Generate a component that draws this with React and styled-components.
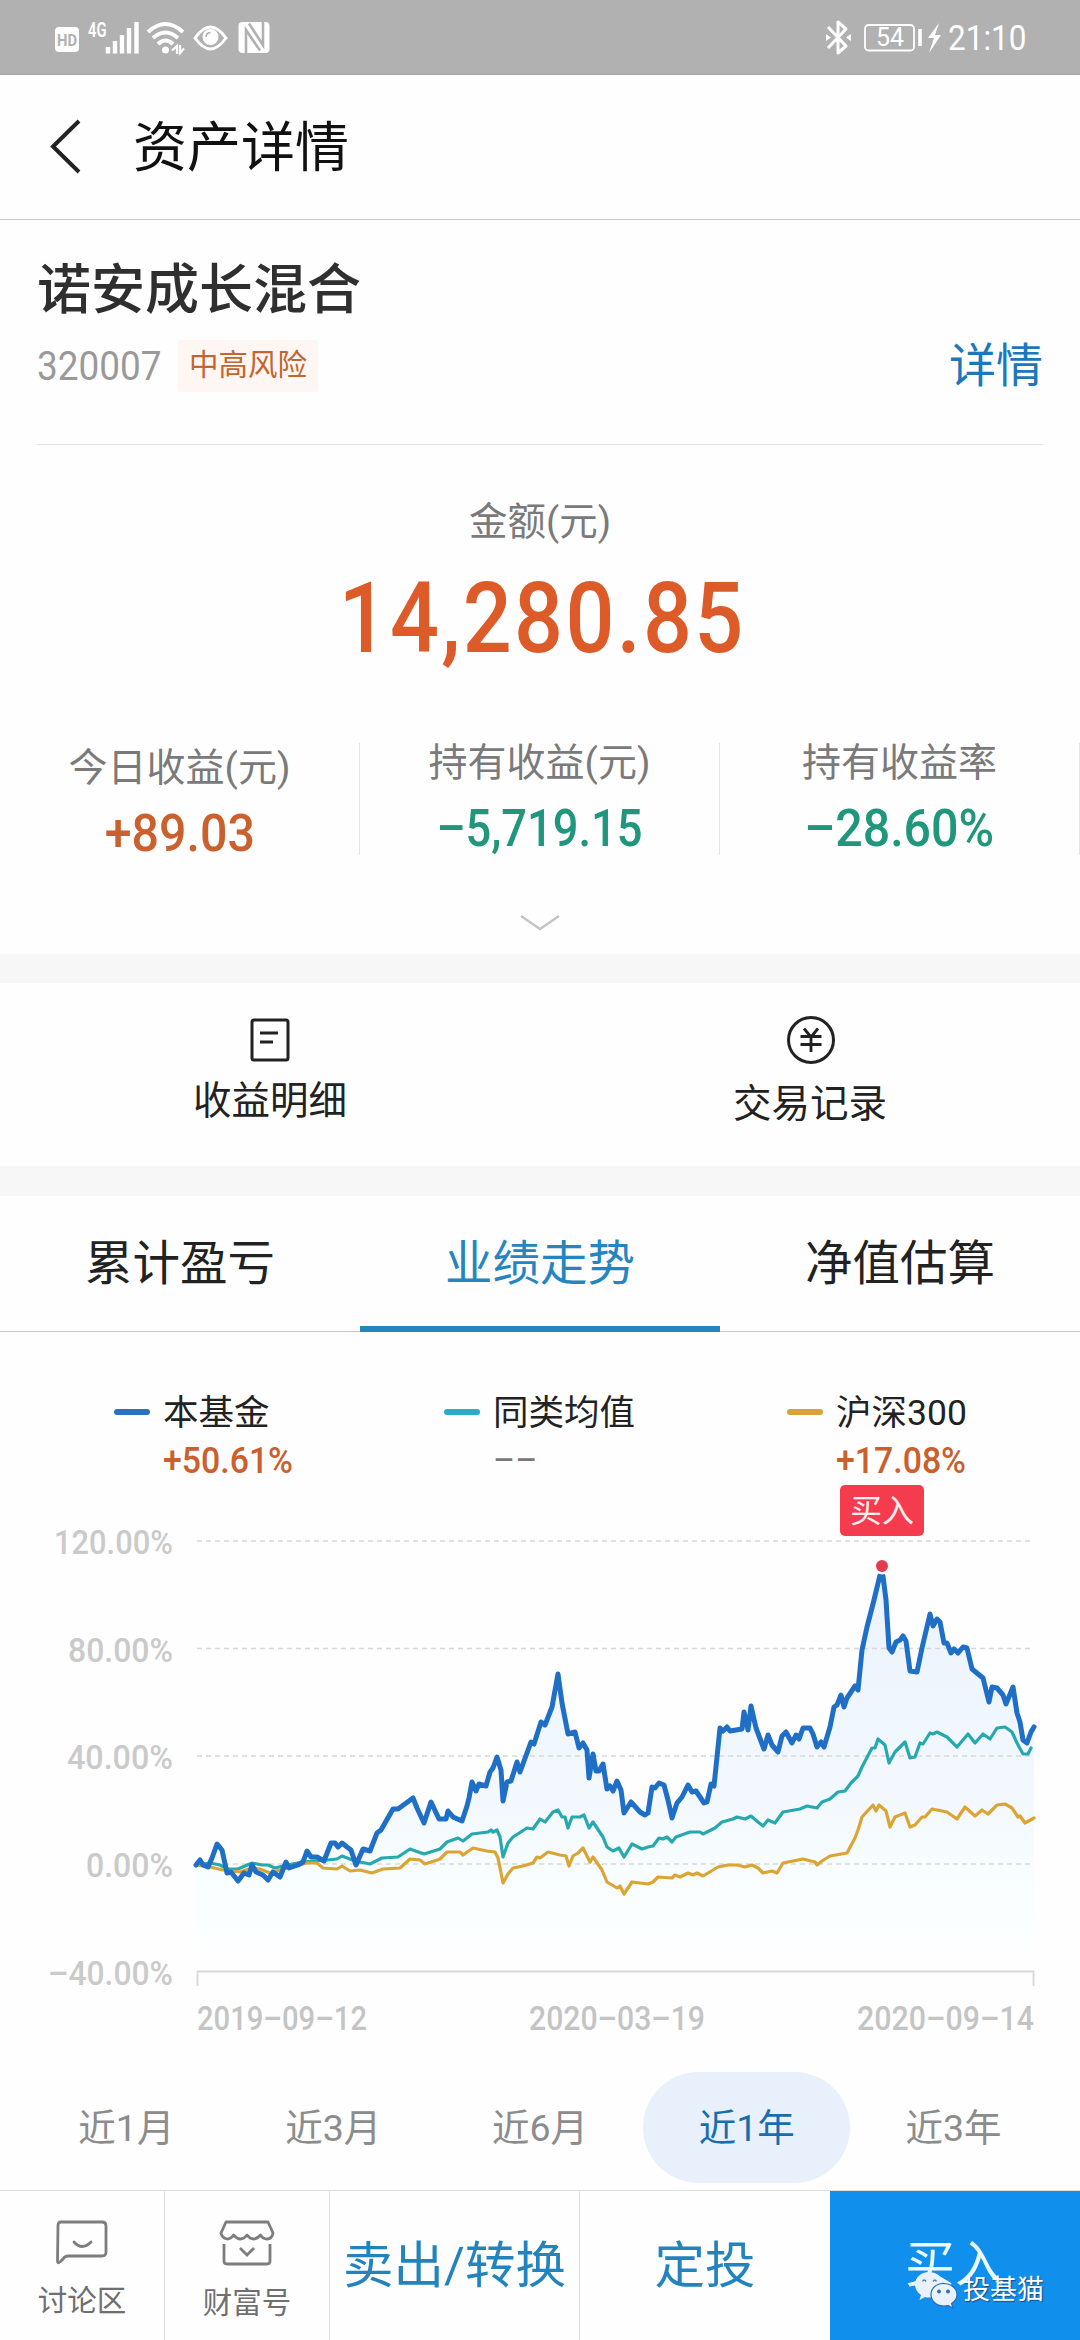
import styled, { createGlobalStyle } from "styled-components";

const fundLine =
  "16,385 20,380 23,385 28,387 32,378 37,364 42,370 47,393 51,392 58,401 64,393 69,395 72,385 76,392 83,395 88,400 93,392 100,397 106,382 109,388 118,385 123,382 127,371 131,377 137,377 144,381 151,363 155,363 158,367 162,363 167,367 171,370 176,385 183,369 190,371 197,353 201,350 213,329 218,329 233,318 237,328 244,343 251,322 259,339 266,339 268,331 273,337 282,341 287,326 289,318 292,302 296,311 299,304 306,306 310,292 313,288 317,277 321,290 323,321 327,302 331,301 337,282 340,292 351,262 354,264 361,242 365,245 372,227 378,194 382,223 388,254 395,252 399,268 403,263 407,270 409,298 413,274 416,291 419,291 423,284 427,309 430,306 433,311 437,301 441,310 444,333 451,322 460,332 465,335 468,333 472,307 475,308 479,303 484,305 488,320 492,338 497,323 502,317 508,305 512,312 516,311 524,323 527,322 531,304 534,306 540,248 543,251 547,247 550,251 562,249 564,232 568,250 571,226 576,248 584,269 588,255 592,265 598,272 602,256 606,252 612,263 616,255 619,259 623,248 630,248 633,254 637,267 641,262 644,267 650,247 654,227 657,225 661,215 664,227 667,218 675,206 678,210 682,170 687,147 694,120 700,95 703,96 706,120 709,168 712,172 716,162 720,160 723,156 726,161 730,191 737,192 742,168 750,134 753,146 757,139 760,142 764,163 767,163 771,173 774,169 778,173 783,167 787,168 792,189 803,198 809,222 812,207 817,208 823,215 826,224 833,207 837,233 840,242 843,260 847,263 851,252 854,247";

const averageLine =
  "16,385 30,383 40,385 48,389 58,389 72,383 82,385 88,385 95,388 107,385 123,382 147,380 157,379 162,376 175,381 190,384 202,378 218,377 230,369 244,374 260,369 267,362 278,358 283,361 292,354 308,352 311,350 313,352 317,350 320,357 323,377 328,363 333,357 347,348 353,349 360,339 365,342 373,332 378,330 382,337 385,337 388,348 392,337 400,337 404,335 409,348 413,342 423,357 427,367 433,371 439,368 444,377 452,364 462,369 468,367 473,366 479,358 483,359 487,357 492,362 496,357 510,352 520,352 523,354 535,348 542,342 553,339 557,337 565,339 571,336 578,342 583,346 588,340 595,343 603,332 620,329 627,326 637,328 642,322 650,319 658,312 665,311 671,303 678,296 682,287 692,268 695,268 698,259 705,265 709,283 715,272 725,262 730,278 735,277 740,263 743,264 750,253 753,254 757,252 767,257 777,267 788,254 795,263 803,254 810,259 817,248 825,247 832,252 837,263 843,274 848,274 851,268";

const indexLine =
  "16,385 30,387 43,390 60,392 72,388 80,389 90,393 100,390 110,387 127,383 137,383 143,388 157,389 162,386 170,391 180,390 192,393 203,389 220,388 230,379 240,380 245,384 260,379 267,372 280,372 283,375 293,368 307,371 315,372 318,378 323,403 328,394 333,388 343,386 353,383 357,377 360,378 368,372 380,375 386,376 389,386 393,376 398,373 403,368 410,382 413,377 422,390 427,402 437,408 440,406 444,414 452,402 460,403 468,404 473,402 478,397 492,398 495,395 500,397 508,393 513,395 517,393 523,396 538,387 548,385 557,385 565,387 572,385 578,388 583,393 592,391 597,393 603,383 623,379 635,382 637,385 642,381 650,376 667,373 675,358 678,350 682,337 693,325 696,331 699,325 706,331 710,347 715,337 725,333 730,347 735,345 742,337 745,337 752,329 767,332 777,339 785,327 795,336 802,330 808,334 817,325 825,324 832,328 838,337 840,336 845,343 854,338";

const stats = [
  { label: "今日收益(元)", value: "+89.03", color: "#c9602d", top: 26, stretch: 0.93 },
  { label: "持有收益(元)", value: "–5,719.15", color: "#20977d", top: 21, stretch: 0.87 },
  { label: "持有收益率", value: "–28.60%", color: "#20977d", top: 21, stretch: 0.93 },
];

const legends = [
  { name: "本基金", value: "+50.61%", color: "#2a72bf", indent: 114 },
  { name: "同类均值", value: "--", color: "#2aabc8", indent: 0 },
  { name: "沪深300", value: "+17.08%", color: "#d9a33a", indent: 0 },
];

const yTicks = [
  { label: "120.00%", y: 61, x: 54 },
  { label: "80.00%", y: 168.5, x: 68 },
  { label: "40.00%", y: 276, x: 67 },
  { label: "0.00%", y: 384, x: 86 },
  { label: "–40.00%", y: 491.5, x: 48 },
];

const dates = [
  { label: "2019–09–12", x: 197, width: 170 },
  { label: "2020–03–19", x: 529, width: 176 },
  { label: "2020–09–14", x: 857, width: 177 },
];

const ranges = ["近1月", "近3月", "近6月", "近1年", "近3年"];

function StatusIcons() {
  return (
    <svg width="240" height="74" viewBox="40 0 240 74" fill="none">
      <rect x="55" y="27" width="24" height="25" rx="4" fill="#fff" />
      <text x="57" y="45.5" fontSize="16" fontWeight="700" fill="#b1b1b1" textLength="20" lengthAdjust="spacingAndGlyphs">
        HD
      </text>
      <text x="88" y="36.5" fontSize="21" fontWeight="600" fill="#fff" textLength="18.5" lengthAdjust="spacingAndGlyphs">
        4G
      </text>
      <path
        d="M108 47V53.500M115 41V53.500M122 35V53.500M129 28V53.500M136.500 22V53.500"
        stroke="#fff"
        strokeWidth="4.400"
      />
      <path
        d="M148 32Q165.500 16 183 32M153 38Q165.500 27 178 38M158 44Q165.500 37 173 44"
        stroke="#fff"
        strokeWidth="4"
      />
      <circle cx="165.500" cy="50" r="3.500" fill="#fff" />
      <path d="M172 50.500L177 46V54M180 45V53L184 48.500" stroke="#fff" strokeWidth="2.200" />
      <path
        d="M195 38C200 31 205 27 210.500 27S221 31 226 38C221 45 216 49 210.500 49S200 45 195 38Z"
        stroke="#fff"
        strokeWidth="3"
      />
      <circle cx="210.500" cy="37" r="8" fill="#fff" />
      <path d="M206 37Q206 33 210.500 32.500" stroke="#b1b1b1" strokeWidth="1.600" />
      <rect x="238.500" y="22" width="31" height="31" rx="4" fill="#fff" />
      <path d="M246 54V30L260 50.500M249 23.500L263 45V21" stroke="#b1b1b1" strokeWidth="2.600" />
    </svg>
  );
}

function BatteryIcons() {
  return (
    <svg width="126" height="74" viewBox="822 0 126 74" fill="none">
      <path
        d="M828 27L846 46L838 53V22L846 29L828 48"
        stroke="#fff"
        strokeWidth="3"
        strokeLinejoin="round"
      />
      <path d="M826 34L831 37.500L826 41ZM851 34L846 37.500L851 41Z" fill="#fff" />
      <rect x="865" y="25" width="49" height="25.500" rx="3.500" stroke="#fff" strokeWidth="1.800" />
      <text x="876" y="46" fontSize="26" fill="#fff" textLength="28" lengthAdjust="spacingAndGlyphs">
        54
      </text>
      <path d="M920 29V46" stroke="#fff" strokeWidth="3.600" />
      <path d="M939 23L928 38H934L929 53L941 35H935Z" fill="#fff" />
    </svg>
  );
}

function Chart() {
  return (
    <ChartSvg width="1080" height="572" viewBox="0 0 1080 572">
      <defs>
        <linearGradient id="fill" x1="0" y1="0" x2="0" y2="1">
          <stop offset="0" stopColor="#ebf3fc" />
          <stop offset="0.6" stopColor="#f3f8fe" />
          <stop offset="0.8" stopColor="#f8fdfe" />
          <stop offset="1" stopColor="#fdffff" />
        </linearGradient>
      </defs>
      <g transform="translate(180 0)">
        <polygon points={`16,470 ${fundLine} 854,470`} fill="url(#fill)" />
      </g>
      {yTicks.map((tick) => (
        <g key={tick.label}>
          {tick.y < 490 && (
            <line x1="197" x2="1032" y1={tick.y} y2={tick.y} stroke="#d8d8d8" strokeWidth="1.6" strokeDasharray="5 4" />
          )}
          <text
            x={tick.x}
            y={tick.y + 13}
            fontSize="34"
            fontWeight="500"
            fill="#cacaca"
            textLength={173 - tick.x}
            lengthAdjust="spacingAndGlyphs"
          >
            {tick.label}
          </text>
        </g>
      ))}
      <path d="M197.500 506V491.500H1033.500V506" fill="none" stroke="#d8d8d8" strokeWidth="1.800" />
      {dates.map((date) => (
        <text
          key={date.label}
          x={date.x}
          y="550"
          fontSize="34"
          fontWeight="500"
          fill="#c4c4c4"
          textLength={date.width}
          lengthAdjust="spacingAndGlyphs"
        >
          {date.label}
        </text>
      ))}
      <g transform="translate(180 0)" fill="none" strokeLinejoin="round" strokeLinecap="round">
        <polyline points={averageLine} stroke="#26a9ae" strokeWidth="3.2" />
        <polyline points={indexLine} stroke="#dba433" strokeWidth="3.2" />
        <polyline points={fundLine} stroke="#1f6fc6" strokeWidth="5" />
      </g>
      <circle cx="882" cy="86" r="8.5" fill="#fff" />
      <circle cx="882" cy="86" r="6" fill="#e53a4e" />
      <rect x="840" y="5" width="84" height="51" rx="5" fill="#f43c4e" />
      <text x="850" y="42" fontSize="32" fill="#ffeef0">
        买入
      </text>
    </ChartSvg>
  );
}

function App() {
  return (
    <Page>
      <GlobalStyle />
      <StatusBar>
        <StatusIcons />
        <StatusRight>
          <BatteryIcons />
          <Clock>
            <Num $stretch={0.9} $origin="left">21:10</Num>
          </Clock>
        </StatusRight>
      </StatusBar>

      <Header>
        <svg width="36" height="60" viewBox="0 0 36 60" fill="none">
          <path d="M31 4L5 29.500L31 55" stroke="#222" strokeWidth="4" />
        </svg>
        <HeaderTitle>资产详情</HeaderTitle>
      </Header>

      <Fund>
        <FundName>诺安成长混合</FundName>
        <FundRow>
          <FundCode>
            <Num $stretch={0.9} $origin="left">320007</Num>
          </FundCode>
          <RiskTag>中高风险</RiskTag>
          <DetailLink>详情</DetailLink>
        </FundRow>
      </Fund>

      <Amount>
        <AmountLabel>金额(元)</AmountLabel>
        <AmountValue>
          <Num $stretch={0.88}>14,280.85</Num>
        </AmountValue>
      </Amount>

      <Stats>
        {stats.map((stat) => (
          <Stat key={stat.label}>
            <StatInner $top={stat.top}>
              <StatLabel>{stat.label}</StatLabel>
              <StatValue $color={stat.color}>
                <Num $stretch={stat.stretch}>{stat.value}</Num>
              </StatValue>
            </StatInner>
          </Stat>
        ))}
      </Stats>
      <Expand>
        <svg width="42" height="20" viewBox="0 0 42 20" fill="none">
          <path d="M2 3L21 16L40 3" stroke="#c4c4c4" strokeWidth="2.400" />
        </svg>
      </Expand>

      <Gap $height={29} />

      <Entries>
        <Entry>
          <svg width="50" height="50" viewBox="0 0 50 50" fill="none" stroke="#222" strokeWidth="3">
            <rect x="7" y="5" width="36" height="40" rx="2" />
            <path d="M15 18H33M15 27H28" />
          </svg>
          <EntryLabel>收益明细</EntryLabel>
        </Entry>
        <Entry>
          <svg width="50" height="50" viewBox="0 0 50 50" fill="none" stroke="#222" strokeWidth="3">
            <circle cx="26" cy="25" r="22.500" />
            <path d="M19 13.500L26 22L33 13.500M26 22V37M15.500 21.500H36.500M15.500 29.500H36.500" strokeWidth="2.800" />
          </svg>
          <EntryLabel $shift={3}>交易记录</EntryLabel>
        </Entry>
      </Entries>

      <Gap $height={30} />

      <Tabs>
        <Tab>累计盈亏</Tab>
        <Tab $active>业绩走势</Tab>
        <Tab>净值估算</Tab>
      </Tabs>

      <Legends>
        {legends.map((item) => (
          <Legend key={item.name} $indent={item.indent}>
            <Dash $color={item.color} />
            <div>
              <LegendName>{item.name}</LegendName>
              <LegendValue $empty={item.value === "--"}>
                <Num $stretch={0.94} $origin="left">
                  {item.value === "--" ? "––" : item.value}
                </Num>
              </LegendValue>
            </div>
          </Legend>
        ))}
      </Legends>

      <Chart />

      <Ranges>
        {ranges.map((range) => (
          <Range key={range} $active={range === "近1年"}>
            {range}
          </Range>
        ))}
      </Ranges>

      <BottomBar>
        <BarItem $width={165}>
          <svg width="56" height="48" viewBox="0 0 56 48" fill="none" stroke="#7d7d7d" strokeWidth="2.800">
            <path d="M4 6Q4 3 7 3H48Q52 3 52 7V33Q52 37 48 37H14Q11 37 9 40L6 43Q3.500 45 3.500 42Z" />
            <path d="M20 23Q28 32 37 23" strokeLinecap="round" />
          </svg>
          <BarLabel>讨论区</BarLabel>
        </BarItem>
        <BarItem $width={165}>
          <svg width="56" height="48" viewBox="0 0 56 48" fill="none" stroke="#7d7d7d" strokeWidth="2.800">
            <path
              d="M7 3H49L54 14Q53 20 48 20Q44 20 41.500 16Q38 20 34.500 20Q31 20 28 16Q25 20 21.500 20Q18 20 14.500 16Q12 20 8 20Q3 19 2 14Z"
              strokeLinejoin="round"
            />
            <path d="M5 25V42Q5 45 8 45H48Q51 45 51 42V25" />
            <path d="M21 29L28 36L35 29" />
          </svg>
          <BarLabel $shift={2}>财富号</BarLabel>
        </BarItem>
        <BarAction $width={250}>卖出/转换</BarAction>
        <BarAction $width={250} $last>
          定投
        </BarAction>
        <BuyButton>
          买入
          <Watermark>
            <svg width="44" height="40" viewBox="0 0 44 40">
              <path
                d="M15 2C7 2 1 7.500 1 14.500C1 19 3.500 22.500 7 25L5.500 30L11 27Q13 27.500 15 27.500C23 27.500 29 22 29 14.500S23 2 15 2Z"
                fill="#e9f1fd"
              />
              <path
                d="M29.500 13.500C22 13.500 17 18.500 17 24.500S22 36 29.500 36Q32 36 34 35.500L39 38L37.500 33.500C41 31.500 43 28 43 24.500C43 18.500 37 13.500 29.500 13.500Z"
                fill="#e9f1fd"
                stroke="#2b6fb5"
                strokeWidth="1.200"
              />
              <path
                d="M8.500 11.500Q10 8.500 12 11.500M19 11.500Q21 8.500 22.500 11.500"
                stroke="#4b7fb5"
                strokeWidth="1.400"
                fill="none"
              />
              <circle cx="25" cy="21.500" r="1.900" fill="#2b6fb5" />
              <circle cx="34" cy="21.500" r="1.900" fill="#2b6fb5" />
            </svg>
            <span>投基猫</span>
          </Watermark>
        </BuyButton>
      </BottomBar>
    </Page>
  );
}

const GlobalStyle = createGlobalStyle`
  * {
    box-sizing: border-box;
  }
  body {
    margin: 0;
    background: #fefefe;
    font-family: Roboto, "Noto Sans CJK SC", sans-serif;
  }
  svg {
    display: block;
    flex: none;
  }
`;

const Page = styled.div`
  width: 1080px;
  height: 2340px;
  overflow: hidden;
  display: flex;
  flex-direction: column;
  white-space: nowrap;

  & > * {
    flex: none;
  }
`;

const Num = styled.span`
  display: inline-block;
  transform: scaleX(${(props) => props.$stretch});
  transform-origin: ${(props) => props.$origin || "center"};
`;

const StatusBar = styled.div`
  height: 75px;
  padding: 0 54px 0 40px;
  display: flex;
  justify-content: space-between;
  background: #b1b1b1;
  border-bottom: 1px solid #a4a4a4;
  color: #fff;
`;

const StatusRight = styled.div`
  display: flex;
`;

const Clock = styled.div`
  width: 78px;
  font-size: 35px;
  line-height: 77px;
`;

const Header = styled.header`
  height: 145px;
  padding-left: 48px;
  display: flex;
  align-items: center;
  border-bottom: 1px solid #c8c8c8;
`;

const HeaderTitle = styled.h1`
  margin: 4px 0 0 49px;
  font-size: 54px;
  line-height: 80px;
  font-weight: 400;
  color: #111;
`;

const Fund = styled.section`
  height: 225px;
  margin: 0 37px;
  padding-top: 31px;
  border-bottom: 1px solid #e2e2e2;
`;

const FundName = styled.h2`
  margin: 0;
  font-size: 54px;
  line-height: 80px;
  font-weight: 500;
  color: #2f2f2f;
`;

const FundRow = styled.div`
  display: flex;
  align-items: center;
  height: 70px;
`;

const FundCode = styled.div`
  width: 141px;
  font-size: 41px;
  color: #999;
`;

const RiskTag = styled.div`
  width: 140px;
  height: 52px;
  font-size: 29.5px;
  line-height: 50px;
  text-align: center;
  color: #c2652f;
  background: #fef6f2;
  border-radius: 4px;
`;

const DetailLink = styled.div`
  margin-left: auto;
  font-size: 47px;
  line-height: 60px;
  color: #1c77bd;
`;

const Amount = styled.section`
  height: 277px;
  padding-top: 51px;
  text-align: center;
`;

const AmountLabel = styled.div`
  font-size: 38.5px;
  line-height: 52px;
  color: #7a7a7a;
`;

const AmountValue = styled.div`
  font-size: 98px;
  line-height: 120px;
  margin-top: 11px;
  font-weight: 500;
  letter-spacing: 2.6px;
  text-indent: 2px;
  color: #dc5b28;
`;

const Stats = styled.section`
  display: grid;
  grid-template-columns: repeat(3, 360px);
  height: 134px;
`;

const Stat = styled.div`
  height: 112px;
  margin-top: 21px;
  border-right: 1px solid #e4e4e4;
`;

const StatInner = styled.div`
  margin-top: ${(props) => props.$top - 21}px;
  text-align: center;
`;

const StatLabel = styled.div`
  font-size: 39px;
  line-height: 40px;
  color: #7a7a7a;
`;

const StatValue = styled.div`
  font-size: 52px;
  line-height: 60px;
  margin-top: 16px;
  font-weight: 500;
  color: ${(props) => props.$color};
`;

const Expand = styled.div`
  height: 98px;
  padding-top: 57px;
  display: flex;
  justify-content: center;
`;

const Gap = styled.div`
  height: ${(props) => props.$height}px;
  background: #f7f7f7;
`;

const Entries = styled.section`
  height: 183px;
  padding-top: 32px;
  display: grid;
  grid-template-columns: 1fr 1fr;
`;

const Entry = styled.div`
  display: flex;
  flex-direction: column;
  align-items: center;
`;

const EntryLabel = styled.div`
  margin-top: ${(props) => 11 + (props.$shift || 0)}px;
  font-size: 38.5px;
  line-height: 50px;
  color: #222;
`;

const Tabs = styled.nav`
  height: 136px;
  display: grid;
  grid-template-columns: repeat(3, 1fr);
  border-bottom: 1px solid #c9c9c9;
`;

const Tab = styled.div`
  height: 136px;
  padding-top: 3px;
  font-size: 47.5px;
  line-height: 130px;
  text-align: center;
  color: ${(props) => (props.$active ? "#2585c0" : "#222")};
  border-bottom: ${(props) => (props.$active ? "6px solid #2585bd" : "0")};
`;

const Legends = styled.div`
  display: grid;
  grid-template-columns: 444px 343px 293px;
  height: 148px;
  padding-top: 56px;
`;

const Legend = styled.div`
  display: flex;
  gap: 13px;
  padding-left: ${(props) => props.$indent}px;
`;

const Dash = styled.span`
  width: 36px;
  height: 6px;
  margin-top: 21px;
  border-radius: 3px;
  background: ${(props) => props.$color};
`;

const LegendName = styled.div`
  font-size: 35.5px;
  line-height: 50px;
  color: #222;
`;

const LegendValue = styled.div`
  font-size: 36px;
  line-height: 46px;
  font-weight: ${(props) => (props.$empty ? 400 : 500)};
  color: ${(props) => (props.$empty ? "#777" : "#c9602d")};
`;

const ChartSvg = styled.svg`
  font-family: Roboto, "Noto Sans CJK SC", sans-serif;
`;

const Ranges = styled.div`
  height: 138px;
  padding: 20px 23px 0;
  display: grid;
  grid-template-columns: repeat(5, 1fr);
`;

const Range = styled.div`
  height: 111px;
  border-radius: 56px;
  font-size: 37.5px;
  line-height: 112px;
  text-align: center;
  color: ${(props) => (props.$active ? "#1a6dad" : "#8c8c8c")};
  background: ${(props) => (props.$active ? "#e8f0fc" : "transparent")};
`;

const BottomBar = styled.footer`
  height: 150px;
  display: flex;
  border-top: 1px solid #dedede;
`;

const BarItem = styled.div`
  width: ${(props) => props.$width}px;
  padding-top: 28px;
  display: flex;
  flex-direction: column;
  align-items: center;
  border-right: 1px solid #dedede;
`;

const BarLabel = styled.div`
  margin-top: ${(props) => 14 + (props.$shift || 0)}px;
  font-size: 29.5px;
  line-height: 40px;
  color: #6f6f6f;
`;

const BarAction = styled.div`
  width: ${(props) => props.$width}px;
  font-size: 50.5px;
  line-height: 149px;
  text-align: center;
  color: #2383bd;
  border-right: ${(props) => (props.$last ? "0" : "1px solid #dedede")};
`;

const BuyButton = styled.div`
  position: relative;
  flex: 1;
  font-size: 50px;
  line-height: 149px;
  text-align: center;
  color: #e9fbff;
  background: #118fec;
`;

/* sits over the buy button's text */
const Watermark = styled.div`
  position: absolute;
  left: 84px;
  top: 79px;
  display: flex;
  align-items: center;
  gap: 5px;
  font-size: 27px;
  line-height: 40px;
  color: #fff;
  text-shadow: 1px 1px 1px rgba(20, 50, 90, 0.7);
`;

export default App;
